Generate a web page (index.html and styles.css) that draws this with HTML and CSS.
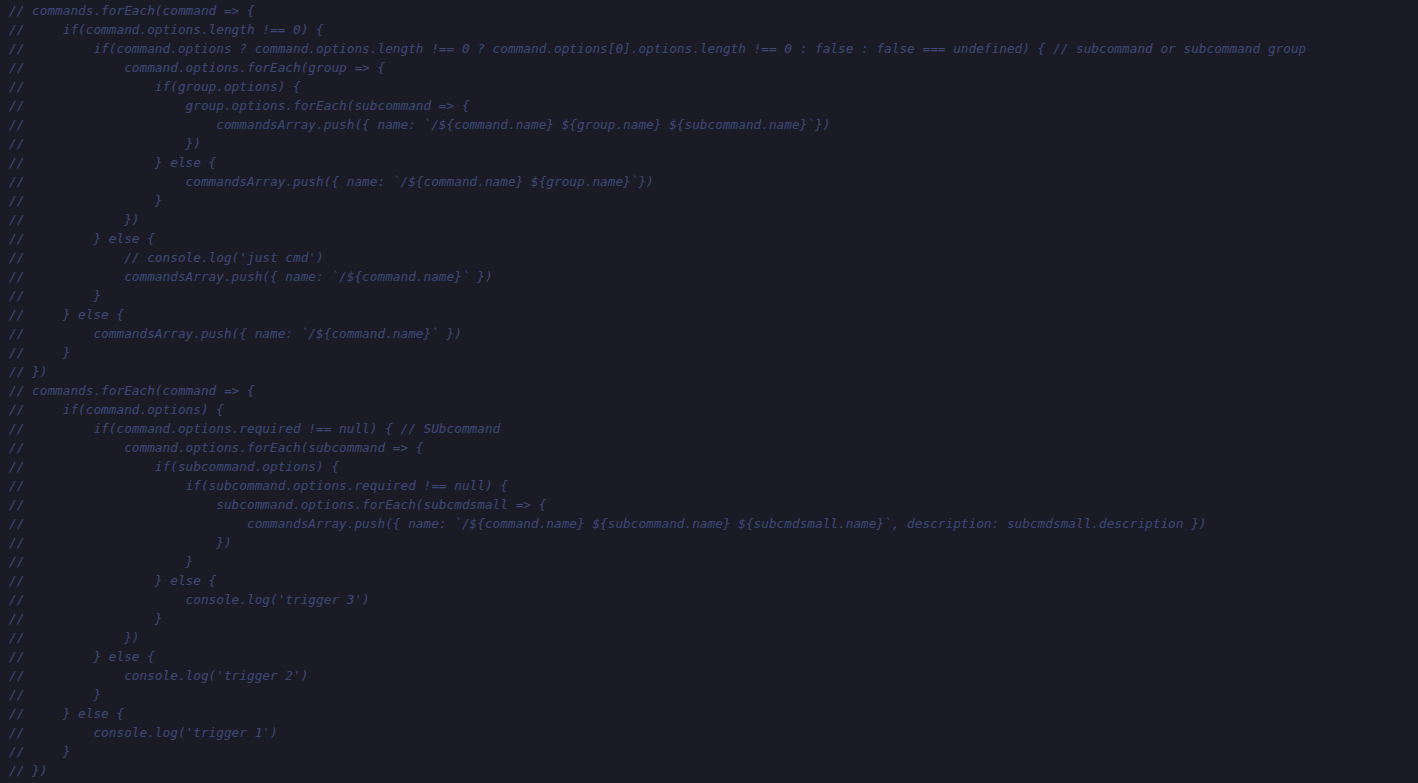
FILE: index.html
```html
<!DOCTYPE html>
<html>
<head>
<meta charset="utf-8">
<link rel="stylesheet" href="styles.css">
</head>
<body>
<pre class="code">// commands.forEach(command =&gt; {
//     if(command.options.length !== 0) {
//         if(command.options ? command.options.length !== 0 ? command.options[0].options.length !== 0 : false : false === undefined) { // subcommand or subcommand group
//             command.options.forEach(group =&gt; {
//                 if(group.options) {
//                     group.options.forEach(subcommand =&gt; {
//                         commandsArray.push({ name: `/${command.name} ${group.name} ${subcommand.name}`})
//                     })
//                 } else {
//                     commandsArray.push({ name: `/${command.name} ${group.name}`})
//                 }
//             })
//         } else {
//             // console.log('just cmd')
//             commandsArray.push({ name: `/${command.name}` })
//         }
//     } else {
//         commandsArray.push({ name: `/${command.name}` })
//     }
// })
// commands.forEach(command =&gt; {
//     if(command.options) {
//         if(command.options.required !== null) { // SUbcommand
//             command.options.forEach(subcommand =&gt; {
//                 if(subcommand.options) {
//                     if(subcommand.options.required !== null) {
//                         subcommand.options.forEach(subcmdsmall =&gt; {
//                             commandsArray.push({ name: `/${command.name} ${subcommand.name} ${subcmdsmall.name}`, description: subcmdsmall.description })
//                         })
//                     }
//                 } else {
//                     console.log('trigger 3')
//                 }
//             })
//         } else {
//             console.log('trigger 2')
//         }
//     } else {
//         console.log('trigger 1')
//     }
// })</pre>
</body>
</html>
```
FILE: styles.css
```css
html, body {
  margin: 0;
  padding: 0;
  background: #1b1b26;
  height: 100%;
  overflow: hidden;
}
.code {
  margin: 0;
  padding: 1px 0 0 9px;
  font-family: "DejaVu Sans Mono", monospace;
  font-style: italic;
  font-size: 12.75px;
  line-height: 19px;
  color: #3d4a78;
  white-space: pre;
}
```
